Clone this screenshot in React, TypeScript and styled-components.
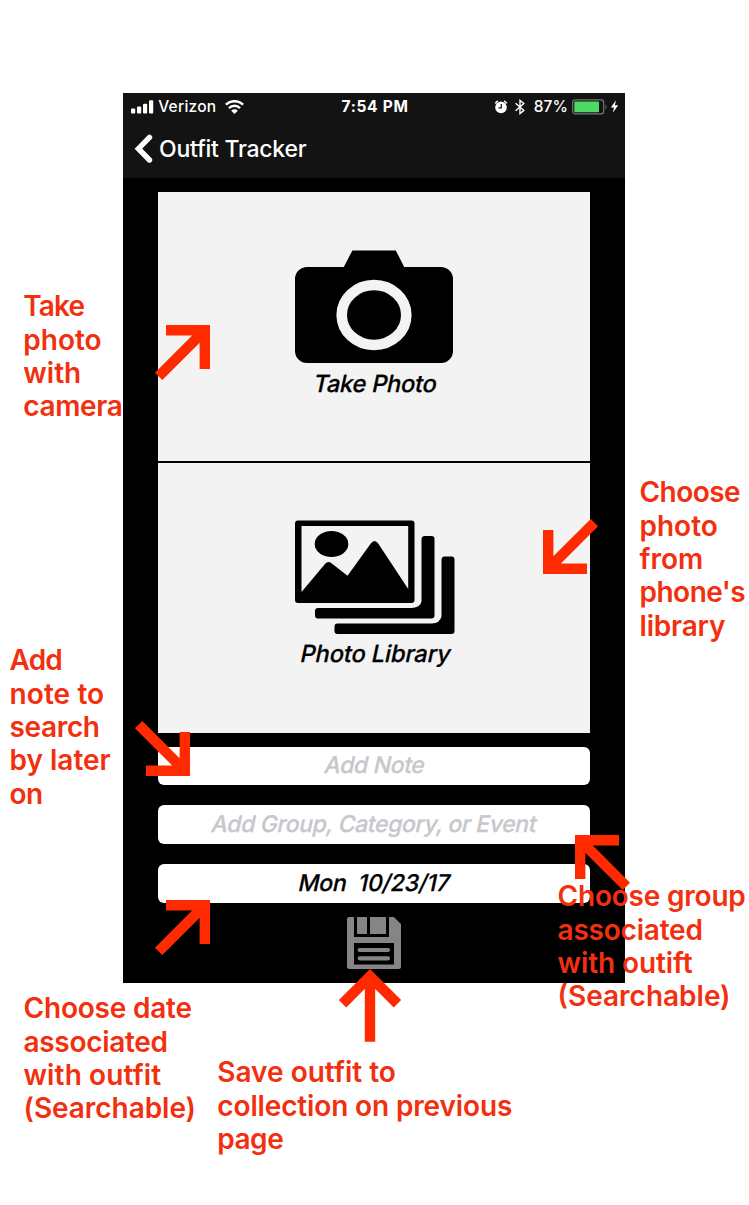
import React from "react";
import styled, { createGlobalStyle } from "styled-components";

const GlobalStyle = createGlobalStyle`
  * { box-sizing: border-box; }
  html, body { margin: 0; padding: 0; background: #fff; }
  body { font-family: Inter, "Liberation Sans", sans-serif; }
`;

const Page = styled.main`
  position: relative;
  width: 749px;
  height: 1205px;
  padding: 93px 0 0 123px;
  overflow: hidden;
  background: #fff;
`;

const Phone = styled.section`
  display: flex;
  flex-direction: column;
  width: 502px;
  height: 890px;
  background: #000;
`;

const Header = styled.header`
  height: 85px;
  background: #131313;
  color: #fff;
`;

const StatusBar = styled.div`
  display: grid;
  grid-template-columns: 1fr auto 1fr;
  align-items: center;
  height: 27px;
  padding: 0 6px 0 8px;
  font-size: 15.5px;
  font-weight: 500;
`;

const StatusGroup = styled.div<{ $end?: boolean }>`
  display: flex;
  align-items: center;
  justify-content: ${(p) => (p.$end ? "flex-end" : "flex-start")};
`;

const StatusText = styled.span<{ $spacing?: number; $bold?: boolean; $left?: number }>`
  margin-left: ${(p) => p.$left ?? 0}px;
  letter-spacing: ${(p) => p.$spacing ?? 0}px;
  font-weight: ${(p) => (p.$bold ? 700 : 500)};
  white-space: nowrap;
`;

const Glyph = styled.svg<{ $left?: number }>`
  display: block;
  flex: none;
  margin-left: ${(p) => p.$left ?? 0}px;
`;

const NavBar = styled.div`
  display: flex;
  align-items: center;
  height: 58px;
  padding-left: 11px;
`;

const NavTitle = styled.h1`
  margin: 0 0 0 6px;
  font-size: 23px;
  font-weight: 500;
  letter-spacing: -0.25px;
  line-height: 28px;
`;

const Content = styled.div`
  display: flex;
  flex-direction: column;
  padding: 14px 35px 0;
`;

const PhotoOption = styled.button<{ $height: number; $top: number }>`
  display: flex;
  flex-direction: column;
  align-items: center;
  height: ${(p) => p.$height}px;
  padding: ${(p) => p.$top}px 0 0;
  border: 0;
  background: #f3f3f3;
  color: #000;
  font-family: inherit;
`;

const Divider = styled.div`
  height: 2px;
  background: #000;
`;

const SlantedText = styled.span<{ $spacing: number }>`
  display: block;
  font-size: 23px;
  line-height: 30px;
  font-weight: 500;
  -webkit-text-stroke: 0.25px currentColor;
  letter-spacing: ${(p) => p.$spacing}px;
  white-space: pre;
  transform: skewX(-12deg);
`;

const OptionLabel = styled(SlantedText)<{ $shift: number }>`
  margin: ${(p) => p.$shift}px 0 0 3px;
  font-size: 23.6px;
`;

const Fields = styled.div`
  display: flex;
  flex-direction: column;
  gap: 20.6px;
  margin-top: 13.5px;
`;

const Field = styled.div<{ $placeholder?: boolean }>`
  display: flex;
  align-items: center;
  justify-content: center;
  height: 38.4px;
  padding: 0 0 1px 1px;
  border-radius: 6px;
  background: #fff;
  color: ${(p) => (p.$placeholder ? "#c7c7cd" : "#000")};
`;

const SaveButton = styled.button`
  display: flex;
  justify-content: center;
  margin: 14.1px 0 0;
  padding: 0;
  border: 0;
  background: none;
`;

const Note = styled.p<{ $x: number; $y: number }>`
  position: absolute;
  left: ${(p) => p.$x}px;
  top: ${(p) => p.$y}px;
  margin: 0;
  color: #f2300f;
  font-size: 28px;
  font-weight: 600;
  line-height: 33.35px;
  white-space: nowrap;
`;

const NoteLine = styled.span<{ $spacing: number }>`
  display: block;
  letter-spacing: ${(p) => p.$spacing}px;
`;

const ArrowSvg = styled.svg<{ $x: number; $y: number; $turn: number }>`
  position: absolute;
  left: ${(p) => p.$x - 60}px;
  top: ${(p) => p.$y}px;
  overflow: visible;
  transform: rotate(${(p) => p.$turn}deg);
  transform-origin: 100% 0;
`;

type ArrowSpec = { x: number; y: number; turn: number };

function Arrow({ x, y, turn }: ArrowSpec) {
  return (
    <ArrowSvg $x={x} $y={y} $turn={turn} width="60" height="60" viewBox="0 0 60 60" fill="none" stroke="#ff2a00" strokeWidth="10.4">
      <path d="M16 5.2H54.8V44M54.8 5.2L8.6 51.4" />
    </ArrowSvg>
  );
}

const arrows: ArrowSpec[] = [
  { x: 210, y: 325.3, turn: 0 },
  { x: 542.5, y: 574, turn: 180 },
  { x: 190, y: 776, turn: 90 },
  { x: 574.7, y: 835.4, turn: -90 },
  { x: 210, y: 899.5, turn: 0 },
  { x: 370.4, y: 969, turn: -45 },
];

type NoteSpec = { x: number; y: number; lines: [string, number][] };

const notes: NoteSpec[] = [
  { x: 23.3, y: 290.45, lines: [["Take", -0.9], ["photo", 0], ["with", 0], ["camera", -0.35]] },
  { x: 639.5, y: 476.45, lines: [["Choose", -0.55], ["photo", 0], ["from", 0], ["phone's", -0.5], ["library", -0.2]] },
  { x: 9.5, y: 644.45, lines: [["Add", -0.8], ["note to", 0.1], ["search", -0.35], ["by later", 0], ["on", -0.5]] },
  { x: 557.5, y: 880.45, lines: [["Choose group", -0.2], ["associated", -0.2], ["with outift", -0.1], ["(Searchable)", 0]] },
  { x: 23.5, y: 992.45, lines: [["Choose date", -0.2], ["associated", -0.3], ["with outfit", 0.12], ["(Searchable)", -0.05]] },
  { x: 217.3, y: 1056.45, lines: [["Save outfit to", 0], ["collection on previous", -0.14], ["page", -0.5]] },
];

function SignalIcon() {
  return (
    <Glyph width="23" height="14" viewBox="0 0 23 14" fill="#fff">
      <rect x="0" y="8.6" width="4.2" height="5" rx="1" />
      <rect x="6" y="6.4" width="4.2" height="7.2" rx="1" />
      <rect x="12" y="3.8" width="4.2" height="9.8" rx="1" />
      <rect x="18" y="0.2" width="4.2" height="13.4" rx="1" />
    </Glyph>
  );
}

function WifiIcon() {
  return (
    <Glyph $left={9} width="19" height="14" viewBox="0 0 19 14" fill="none" stroke="#fff" strokeWidth="2.5">
      <path d="M.9 4.7a12.2 12.2 0 0 1 17.2 0M4 8.1a7.8 7.8 0 0 1 11 0" />
      <path d="M9.5 13.9L6.2 10.7a4.6 4.6 0 0 1 6.6 0z" fill="#fff" stroke="none" />
    </Glyph>
  );
}

function AlarmIcon() {
  return (
    <Glyph width="14" height="14" viewBox="0 0 13 14">
      <circle cx="6.5" cy="7.4" r="5.8" fill="#fff" />
      <path d="M.7 3.5A6 6 0 0 1 3.4 1M12.3 3.5A6 6 0 0 0 9.6 1" fill="none" stroke="#fff" strokeWidth="1.4" />
      <path d="M6.8 4v3.8H4" fill="none" stroke="#131313" strokeWidth="1.2" />
    </Glyph>
  );
}

function BluetoothIcon() {
  return (
    <Glyph $left={7} width="10" height="16" viewBox="0 0 10 16" fill="none" stroke="#fff" strokeWidth="1.4">
      <path d="M.6 4.3l8.2 7.2L5 14.6V1.4l3.8 3.1-8.2 7.2" />
    </Glyph>
  );
}

function BatteryIcon() {
  return (
    <Glyph $left={4} width="36" height="16" viewBox="0 0 36 16">
      <rect x=".7" y=".9" width="31" height="14" rx="2.6" fill="none" stroke="#777" strokeWidth="1.2" />
      <rect x="2.3" y="2.6" width="24.7" height="10.6" rx=".8" fill="#4cd964" />
      <path d="M33.5 5.4q2 2.5 0 5z" fill="#777" />
    </Glyph>
  );
}

function BoltIcon() {
  return (
    <Glyph $left={2} width="9" height="13" viewBox="0 0 9 13" fill="#fff">
      <path d="M6 .3L.8 7.4H4L2.8 12.7 8.2 5.3H4.9z" />
    </Glyph>
  );
}

function BackIcon() {
  return (
    <Glyph width="19" height="30" viewBox="0 0 19 30" fill="none" stroke="#fff" strokeWidth="5.4" strokeLinecap="round">
      <path d="M15.5 3.4L4.4 14.7 15.5 26" />
    </Glyph>
  );
}

function CameraIcon() {
  return (
    <Glyph width="158" height="113" viewBox="0 0 158 113">
      <path d="M12 17H48.8L57.4.5H100.8L109.2 17H146a12 12 0 0 1 12 12V101a12 12 0 0 1-12 12H12a12 12 0 0 1-12-12V29a12 12 0 0 1 12-12z" />
      <ellipse cx="79" cy="65" rx="32.3" ry="30" fill="none" stroke="#f3f3f3" strokeWidth="10.6" />
    </Glyph>
  );
}

function LibraryIcon() {
  return (
    <Glyph $left={1} width="160" height="114" viewBox="0 0 160 114">
      <path fillRule="evenodd" d="M3 .5H116.5a3 3 0 0 1 3 3V80a3 3 0 0 1-3 3H3a3 3 0 0 1-3-3V3.5a3 3 0 0 1 3-3zM6.5 6V72L30.4 43.5Q33 40.5 36.5 43.2L52.5 55.8 75.8 23.5Q79.5 18.5 83.2 23.5L113.2 69V6z" />
      <ellipse cx="36.5" cy="24" rx="16.8" ry="13" />
      <path d="M129 16h7.5a3 3 0 0 1 3 3V95.5a3 3 0 0 1-3 3H23a3 3 0 0 1-3-3V91a3 3 0 0 1 3-3H117Q126 87 126.5 81V19a3 3 0 0 1 2.5-3z" />
      <path d="M149 36.5h7.5a3 3 0 0 1 3 3V111a3 3 0 0 1-3 3H42.5a3 3 0 0 1-3-3V106.5a3 3 0 0 1 3-3H137Q145 103 146.5 96.5V39.500a3 3 0 0 1 2.5-3z" />
    </Glyph>
  );
}

function SaveIcon() {
  return (
    <Glyph width="54" height="52" viewBox="0 0 54 52">
      <path d="M2.5 0H46.8L54 7V49.5a2.5 2.5 0 0 1-2.5 2.5H2.5A2.5 2.5 0 0 1 0 49.5V2.5A2.5 2.5 0 0 1 2.5 0z" fill="#858585" />
      <path d="M7 0H42V20H7zM7 26H47V47.5H7z" fill="#000" />
      <path d="M10 0H20V17H10zM23 0H39V17H23z" fill="#858585" />
      <path d="M12.7 33H41M12.7 41.3H41" stroke="#858585" strokeWidth="4.2" strokeLinecap="round" />
    </Glyph>
  );
}

export default function App() {
  return (
    <>
      <GlobalStyle />
      <Page>
        <Phone>
          <Header>
            <StatusBar>
              <StatusGroup>
                <SignalIcon />
                <StatusText $left={4.2} $spacing={0.25}>Verizon</StatusText>
                <WifiIcon />
              </StatusGroup>
              <StatusText $bold $spacing={0.7}>7:54 PM</StatusText>
              <StatusGroup $end>
                <AlarmIcon />
                <BluetoothIcon />
                <StatusText $left={9} $spacing={0.1}>87%</StatusText>
                <BatteryIcon />
                <BoltIcon />
              </StatusGroup>
            </StatusBar>
            <NavBar>
              <BackIcon />
              <NavTitle>Outfit Tracker</NavTitle>
            </NavBar>
          </Header>
          <Content>
            <PhotoOption $height={269} $top={58}>
              <CameraIcon />
              <OptionLabel $spacing={-0.25} $shift={6}>Take Photo</OptionLabel>
            </PhotoOption>
            <Divider />
            <PhotoOption $height={270} $top={57}>
              <LibraryIcon />
              <OptionLabel $spacing={-0.1} $shift={5}>Photo Library</OptionLabel>
            </PhotoOption>
            <Fields>
              <Field $placeholder><SlantedText $spacing={-0.4}>Add Note</SlantedText></Field>
              <Field $placeholder><SlantedText $spacing={-0.37}>Add Group, Category, or Event</SlantedText></Field>
              <Field><SlantedText $spacing={-0.2}>{"Mon  10/23/17"}</SlantedText></Field>
            </Fields>
            <SaveButton aria-label="Save outfit">
              <SaveIcon />
            </SaveButton>
          </Content>
        </Phone>
        {arrows.map((a, i) => (
          <Arrow key={i} {...a} />
        ))}
        {notes.map((n, i) => (
          <Note key={i} $x={n.x} $y={n.y}>
            {n.lines.map(([text, spacing]) => (
              <NoteLine key={text} $spacing={spacing}>{text}</NoteLine>
            ))}
          </Note>
        ))}
      </Page>
    </>
  );
}
